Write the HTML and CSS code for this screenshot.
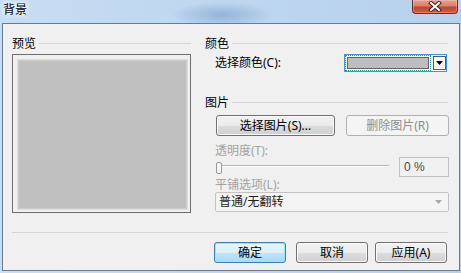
FILE: index.html
```html
<!DOCTYPE html>
<html lang="zh">
<head>
<meta charset="utf-8">
<title>背景</title>
<link rel="stylesheet" href="styles.css">
</head>
<body>
<div class="window">
  <div class="titlebar">
    <span class="title">背景</span>
    <div class="close">
      <svg width="14" height="11" viewBox="0 0 14 11"><path d="M3 2 L11 9 M11 2 L3 9" stroke="#4a2019" stroke-width="4" stroke-linecap="square"/><path d="M3 2 L11 9 M11 2 L3 9" stroke="#fff" stroke-width="2" stroke-linecap="square"/></svg>
    </div>
  </div>
  <div class="client">
    <div class="columns">
      <section class="col-left">
        <div class="group-head"><span>预览</span><i class="rule"></i></div>
        <div class="preview"><div class="preview-fill"></div></div>
      </section>
      <section class="col-right">
        <div class="group-head"><span>颜色</span><i class="rule"></i></div>
        <div class="color-row">
          <span class="label">选择颜色(C):</span>
          <div class="colorpick">
            <div class="focusrect"><div class="swatch"></div></div>
            <div class="dropbtn"><svg width="7" height="4" viewBox="0 0 7 4"><path d="M0 0 H7 L3.5 4 Z" fill="#000"/></svg></div>
          </div>
        </div>
        <div class="group-head pic-head"><span>图片</span><i class="rule"></i></div>
        <div class="btn-row">
          <button class="btn btn-pick">选择图片(S)...</button>
          <button class="btn btn-del" disabled>删除图片(R)</button>
        </div>
        <div class="dlabel">透明度(T):</div>
        <div class="slider-row">
          <div class="slider"><i class="thumb"></i><i class="track"></i></div>
          <div class="num">0 %</div>
        </div>
        <div class="dlabel tile-label">平铺选项(L):</div>
        <div class="combo">
          <span>普通/无翻转</span>
          <svg width="7" height="4" viewBox="0 0 7 4"><path d="M0 0 H7 L3.5 4 Z" fill="#a8a8a8"/></svg>
        </div>
      </section>
    </div>
    <div class="sep"></div>
    <div class="footer">
      <button class="btn btn-default">确定</button>
      <button class="btn btn-cancel">取消</button>
      <button class="btn btn-apply">应用(A)</button>
    </div>
  </div>
</div>
</body>
</html>
```

FILE: styles.css
```css
* { box-sizing: border-box; }
html, body { margin: 0; padding: 0; }
body {
  width: 461px;
  height: 273px;
  overflow: hidden;
  font-family: "Noto Sans", "Noto Sans CJK SC", sans-serif;
  font-size: 12px;
  color: #000;
}
.window {
  width: 461px;
  height: 273px;
  background:
    radial-gradient(ellipse 50px 13px at 222px 15px, rgba(105,145,195,0.5), rgba(105,145,195,0)),
    linear-gradient(to right, #c6ddf3 0%, #bed6ef 50%, #b8d1eb 100%);
  display: flex;
  flex-direction: column;
}
.titlebar {
  height: 23px;
  flex: none;
  display: flex;
  align-items: flex-start;
  justify-content: space-between;
}
.title {
  margin: 2px 0 0 3px;
  line-height: 14px;
  font-family: "Noto Sans CJK SC", sans-serif;
  text-shadow: 0 0 4px #fff, 0 0 6px #fff, 0 0 8px rgba(255,255,255,0.8);
}
.close {
  width: 46px;
  height: 14px;
  margin-right: 3px;
  border: 1px solid #6e2d22;
  border-top: none;
  border-radius: 0 0 4px 4px;
  background: linear-gradient(#e6a08e 0%, #d9826c 45%, #c4452e 55%, #cf5d40 100%);
  box-shadow: inset 0 0 0 1px rgba(255,210,200,0.35);
  display: flex;
  align-items: center;
  justify-content: center;
}
.client {
  margin-left: 2px;
  width: 458px;
  height: 248px;
  border: 1px solid #6d7b89;
  background: #f0f0f0;
  padding: 12px 0 0 9px;
}
.columns {
  display: flex;
  gap: 14px;
}
.col-left { width: 179px; }
.col-right { width: 244px; display: flex; flex-direction: column; }
.group-head {
  height: 14px;
  line-height: 14px;
  display: flex;
  align-items: center;
  font-family: "Noto Sans CJK SC", sans-serif;
}
.rule {
  flex: 1;
  height: 1px;
  background: #d5d5d5;
  margin-left: 3px;
}
.col-right .rule { margin-right: 1px; }
.preview {
  margin-top: 4px;
  width: 179px;
  height: 159px;
  border: 1px solid #6e6e6e;
  padding: 4px 2px 2px 4px;
}
.preview-fill {
  width: 100%;
  height: 100%;
  background: #c0c0c0;
  border: 1px solid #dcdcdc;
  box-shadow: inset 0 0 0 1px #cdcdcd;
}
.color-row {
  margin-top: 4px;
  height: 18px;
  display: flex;
  align-items: center;
  justify-content: space-between;
  padding-left: 10px;
  padding-right: 2px;
}
.label { line-height: 14px; }
.colorpick {
  width: 103px;
  height: 18px;
  border: 1px solid #3d95e8;
  background: #fff;
  display: flex;
  align-items: stretch;
}
.focusrect {
  width: 86px;
  border: 1px dotted #1a9e8c;
  padding: 1px;
}
.swatch {
  width: 100%;
  height: 100%;
  background: #bdbdbd;
  border: 1px solid #646464;
}
.dropbtn {
  margin: 1px 0 1px 2px;
  width: 13px;
  border: 1px solid #5a5a5a;
  background: linear-gradient(#ffffff, #ececec);
  box-shadow: inset 0 0 0 1px #fff;
  display: flex;
  align-items: center;
  justify-content: center;
}
.pic-head { margin-top: 23px; }
.btn-row {
  margin-top: 6px;
  height: 21px;
  display: flex;
  padding-left: 11px;
  gap: 11px;
}
.btn {
  height: 21px;
  padding: 0;
  font: inherit;
  line-height: 14px;
  color: #000;
  border: 1px solid #707070;
  border-radius: 3px;
  background: linear-gradient(#f2f2f2 0%, #ebebeb 50%, #dddddd 51%, #cfcfcf 100%);
  box-shadow: inset 0 0 0 1px #fbfbfb;
}
.btn-pick { width: 119px; }
.btn-del {
  width: 103px;
  color: #8d8d8d;
  border-color: #adb2b5;
  background: #f4f4f4;
  box-shadow: none;
}
.dlabel {
  margin-top: 9px;
  padding-left: 10px;
  line-height: 12px;
  height: 12px;
  color: #a3a3a3;
}
.tile-label { margin-top: 2px; }
.slider-row {
  height: 20px;
  display: flex;
  align-items: stretch;
  padding-left: 11px;
}
.slider {
  width: 173px;
  display: flex;
  align-items: center;
}
.thumb {
  width: 6px;
  height: 12px;
  border: 1px solid #9a9a9a;
  border-radius: 2px;
  background: #f4f4f4;
  margin-top: 2px;
  flex: none;
}
.track {
  flex: 1;
  height: 2px;
  margin-top: -2px;
  border-top: 1px solid #b4b4b4;
  border-bottom: 1px solid #fff;
}
.num {
  margin-left: 10px;
  width: 50px;
  border: 1px solid #c2c2c2;
  background: #f0f0f0;
  color: #4a4a4a;
  padding-left: 4px;
  line-height: 18px;
  font-family: "Liberation Sans", sans-serif;
  font-size: 12px;
}
.combo {
  margin-top: 1px;
  margin-left: 10px;
  width: 234px;
  height: 20px;
  border: 1px solid #c4c4c4;
  border-radius: 2px;
  background: #f4f4f4;
  display: flex;
  align-items: center;
  justify-content: space-between;
  padding: 0 6px 0 3px;
  color: #1e1e1e;
  line-height: 14px;
}
.sep {
  margin-top: 19px;
  width: 436px;
  height: 1px;
  background: #d5d5d5;
}
.footer {
  margin-top: 9px;
  padding-left: 202px;
  display: flex;
}
.btn-default {
  width: 72px;
  border-color: #3c7fb1;
  background: linear-gradient(#eaf6fd 0%, #d9f0fc 50%, #bee6fd 51%, #a7d9f5 100%);
  box-shadow: inset 0 0 0 1px #9fe0fc;
}
.btn-cancel { width: 72px; margin-left: 10px; }
.btn-apply { width: 72px; margin-left: 7px; }
```
